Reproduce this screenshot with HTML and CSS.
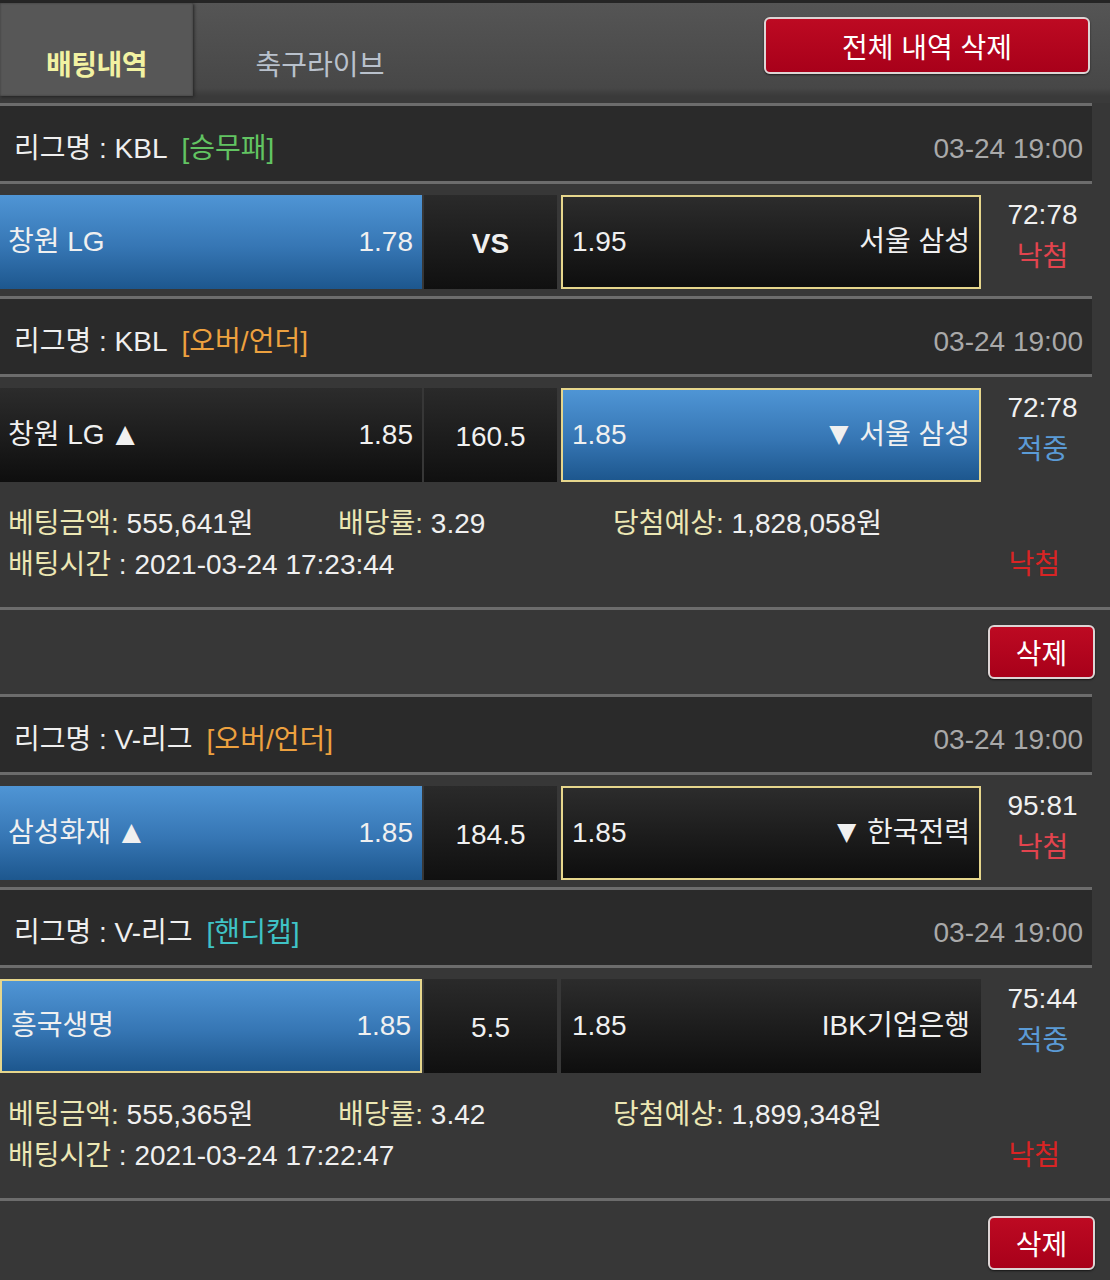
FILE: index.html
```html
<!DOCTYPE html>
<html lang="ko">
<head>
    <meta charset="UTF-8">
    <meta name="viewport" content="width=device-width, initial-scale=1.0">
    <title>배팅내역</title>
    <link rel="stylesheet" href="styles.css">
</head>
<body>
    <div class="topbar">
        <div class="tab active">배팅내역</div>
        <div class="tab">축구라이브</div>
        <button class="btn-red btn-all">전체 내역 삭제</button>
    </div>

    <!-- bet 1 -->
    <div class="bet">
        <div class="league">
            <span class="league-name">리그명 : KBL</span>
            <span class="type green">[승무패]</span>
            <span class="date">03-24 19:00</span>
        </div>
        <div class="match">
            <div class="pick home picked"><span>창원 LG</span><span>1.78</span></div>
            <div class="mid vs">VS</div>
            <div class="pick away won"><span>1.95</span><span>서울 삼성</span></div>
            <div class="result"><div>72:78</div><div class="lose">낙첨</div></div>
        </div>

        <div class="league">
            <span class="league-name">리그명 : KBL</span>
            <span class="type orange">[오버/언더]</span>
            <span class="date">03-24 19:00</span>
        </div>
        <div class="match">
            <div class="pick home"><span>창원 LG <span class="tri up">▲</span></span><span>1.85</span></div>
            <div class="mid">160.5</div>
            <div class="pick away picked won"><span>1.85</span><span><span class="tri down">▼</span> 서울 삼성</span></div>
            <div class="result"><div>72:78</div><div class="win">적중</div></div>
        </div>

        <div class="info">
            <div class="info-row">
                <span class="col1"><span class="label">베팅금액:</span> 555,641원</span>
                <span class="col2"><span class="label">배당률:</span> 3.29</span>
                <span><span class="label">당첨예상:</span> 1,828,058원</span>
            </div>
            <div class="info-row">
                <span><span class="label">배팅시간</span> : 2021-03-24 17:23:44</span>
                <span class="status">낙첨</span>
            </div>
        </div>
        <div class="actions">
            <button class="btn-red btn-del">삭제</button>
        </div>
    </div>

    <!-- bet 2 -->
    <div class="bet">
        <div class="league">
            <span class="league-name">리그명 : V-리그</span>
            <span class="type orange">[오버/언더]</span>
            <span class="date">03-24 19:00</span>
        </div>
        <div class="match">
            <div class="pick home picked"><span>삼성화재 <span class="tri up">▲</span></span><span>1.85</span></div>
            <div class="mid">184.5</div>
            <div class="pick away won"><span>1.85</span><span><span class="tri down">▼</span> 한국전력</span></div>
            <div class="result"><div>95:81</div><div class="lose">낙첨</div></div>
        </div>

        <div class="league">
            <span class="league-name">리그명 : V-리그</span>
            <span class="type cyan">[핸디캡]</span>
            <span class="date">03-24 19:00</span>
        </div>
        <div class="match">
            <div class="pick home picked won"><span>흥국생명</span><span>1.85</span></div>
            <div class="mid">5.5</div>
            <div class="pick away"><span>1.85</span><span>IBK기업은행</span></div>
            <div class="result"><div>75:44</div><div class="win">적중</div></div>
        </div>

        <div class="info">
            <div class="info-row">
                <span class="col1"><span class="label">베팅금액:</span> 555,365원</span>
                <span class="col2"><span class="label">배당률:</span> 3.42</span>
                <span><span class="label">당첨예상:</span> 1,899,348원</span>
            </div>
            <div class="info-row">
                <span><span class="label">배팅시간</span> : 2021-03-24 17:22:47</span>
                <span class="status">낙첨</span>
            </div>
        </div>
        <div class="actions">
            <button class="btn-red btn-del">삭제</button>
        </div>
    </div>
</body>
</html>
```

FILE: styles.css
```css
body {
    font-family: "Liberation Sans", "Noto Sans CJK KR", sans-serif;
    margin: 0;
    padding: 0;
    background-color: #373737;
    color: #f0f0f0;
    font-size: 28px;
    line-height: 1.3;
    width: 1110px;
    overflow: hidden;
}
.topbar {
    display: flex;
    height: 100px;
    border-top: 3px solid #252525;
    background: linear-gradient(#555555, #474747 85%, #3a3a3a 93%);
}
.tab {
    display: flex;
    align-items: flex-end;
    justify-content: center;
    height: 93px;
    padding-bottom: 12px;
    box-sizing: border-box;
    color: #b9c1cc;
    font-size: 28px;
}
.tab:nth-child(2) {
    width: 250px;
    margin-left: 2px;
}
.tab.active {
    width: 193px;
    background-color: #575757;
    box-shadow: 1px 1px 3px #222, inset 0 0 2px #333;
    color: #f2f2a2;
    font-weight: bold;
    letter-spacing: -0.5px;
}
button {
    font-family: inherit;
    cursor: pointer;
}
.btn-red {
    background: linear-gradient(#bd0a22, #a8001a);
    color: white;
    border: 2px solid #ddd4d4;
    border-radius: 6px;
    box-shadow: 0 1px 2px rgba(0, 0, 0, 0.6);
    font-size: 28px;
    padding: 0;
}
.btn-all {
    margin: 14px 20px 0 auto;
    width: 326px;
    height: 57px;
}
.league {
    display: flex;
    align-items: center;
    margin-right: 18px;
    padding: 11px 9px 0 14px;
    box-sizing: border-box;
    height: 81px;
    background-color: #2a2a2a;
    border-top: 3px solid #6c6c6c;
    border-bottom: 3px solid #6c6c6c;
}
.league-name {
    color: #efefef;
}
.type {
    margin-left: 14px;
}
.green {
    color: #62c462;
}
.orange {
    color: #eda13f;
}
.cyan {
    color: #3fc3c6;
}
.date {
    margin-left: auto;
    color: #a9a9a9;
}
.match {
    display: flex;
    height: 112px;
    padding: 11px 0 7px;
    box-sizing: border-box;
}
.pick {
    display: flex;
    align-items: center;
    justify-content: space-between;
    box-sizing: border-box;
    padding: 0 9px 0 8px;
    background: linear-gradient(#2c2c2c, #0e0e0e);
}
.pick.home {
    width: 422px;
    margin-right: 2px;
}
.pick.away {
    width: 420px;
    padding-left: 11px;
    padding-right: 11px;
}
.pick.picked {
    background: linear-gradient(#4f95d5, #3676b4 55%, #1d578e);
}
.pick.won {
    border: 2px solid #e6d68c;
}
.pick.home.won {
    padding-left: 9px;
    padding-right: 9px;
}
.pick.away.won {
    padding-left: 9px;
    padding-right: 9px;
}
.tri {
    font-family: "DejaVu Sans", sans-serif;
    font-size: 25px;
    position: relative;
    top: -2px;
}
.tri.up {
    margin-left: 3px;
}
.tri.down {
    margin-right: 3px;
}
.mid {
    display: flex;
    align-items: center;
    justify-content: center;
    width: 133px;
    margin-right: 4px;
    padding-top: 4px;
    box-sizing: border-box;
    background: linear-gradient(#2a2a2a, #101010);
}
.mid.vs {
    font-weight: bold;
}
.result {
    flex: 1;
    display: flex;
    flex-direction: column;
    justify-content: center;
    align-items: center;
    padding: 0 6px 12px 0;
    line-height: 42px;
}
.lose {
    color: #e2444e;
}
.win {
    color: #5b9bd6;
}
.info {
    padding: 15px 0 21px 8px;
    border-bottom: 3px solid #6c6c6c;
}
.info-row {
    display: flex;
    height: 41px;
    align-items: center;
}
.label {
    color: #ece7b4;
}
.col1 {
    width: 330px;
}
.col2 {
    width: 275px;
}
.status {
    margin-left: auto;
    margin-right: 50px;
    color: #d92424;
}
.actions {
    display: flex;
    justify-content: flex-end;
    height: 84px;
    padding: 15px 15px 0 0;
    box-sizing: border-box;
}
.btn-del {
    width: 107px;
    height: 54px;
}
```
